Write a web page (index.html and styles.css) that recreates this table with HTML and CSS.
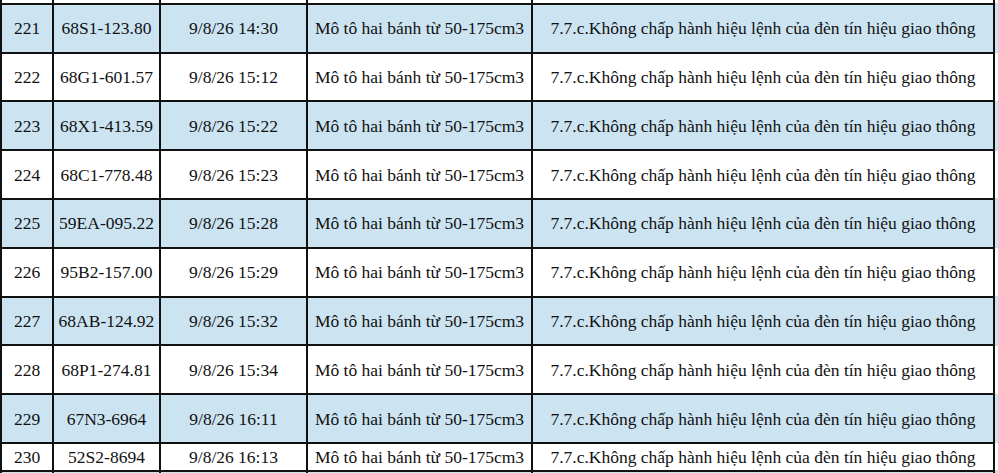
FILE: index.html
```html
<!DOCTYPE html>
<html lang="vi">
<head>
<meta charset="utf-8">
<link rel="stylesheet" href="styles.css">
</head>
<body>
<div class="sheet">
<table class="grid">
<colgroup>
<col class="c-no"><col class="c-plate"><col class="c-time"><col class="c-type"><col class="c-err"><col class="c-extra">
</colgroup>
<tbody>
<tr class="row plain"><td></td><td></td><td></td><td></td><td></td><td class="extra"></td></tr>
<tr class="row blue"><td>221</td><td>68S1-123.80</td><td>9/8/26 14:30</td><td>Mô tô hai bánh từ 50-175cm3</td><td>7.7.c.Không chấp hành hiệu lệnh của đèn tín hiệu giao thông</td><td class="extra"></td></tr>
<tr class="row plain"><td>222</td><td>68G1-601.57</td><td>9/8/26 15:12</td><td>Mô tô hai bánh từ 50-175cm3</td><td>7.7.c.Không chấp hành hiệu lệnh của đèn tín hiệu giao thông</td><td class="extra"></td></tr>
<tr class="row blue"><td>223</td><td>68X1-413.59</td><td>9/8/26 15:22</td><td>Mô tô hai bánh từ 50-175cm3</td><td>7.7.c.Không chấp hành hiệu lệnh của đèn tín hiệu giao thông</td><td class="extra"></td></tr>
<tr class="row plain"><td>224</td><td>68C1-778.48</td><td>9/8/26 15:23</td><td>Mô tô hai bánh từ 50-175cm3</td><td>7.7.c.Không chấp hành hiệu lệnh của đèn tín hiệu giao thông</td><td class="extra"></td></tr>
<tr class="row blue"><td>225</td><td>59EA-095.22</td><td>9/8/26 15:28</td><td>Mô tô hai bánh từ 50-175cm3</td><td>7.7.c.Không chấp hành hiệu lệnh của đèn tín hiệu giao thông</td><td class="extra"></td></tr>
<tr class="row plain"><td>226</td><td>95B2-157.00</td><td>9/8/26 15:29</td><td>Mô tô hai bánh từ 50-175cm3</td><td>7.7.c.Không chấp hành hiệu lệnh của đèn tín hiệu giao thông</td><td class="extra"></td></tr>
<tr class="row blue"><td>227</td><td>68AB-124.92</td><td>9/8/26 15:32</td><td>Mô tô hai bánh từ 50-175cm3</td><td>7.7.c.Không chấp hành hiệu lệnh của đèn tín hiệu giao thông</td><td class="extra"></td></tr>
<tr class="row plain"><td>228</td><td>68P1-274.81</td><td>9/8/26 15:34</td><td>Mô tô hai bánh từ 50-175cm3</td><td>7.7.c.Không chấp hành hiệu lệnh của đèn tín hiệu giao thông</td><td class="extra"></td></tr>
<tr class="row blue"><td>229</td><td>67N3-6964</td><td>9/8/26 16:11</td><td>Mô tô hai bánh từ 50-175cm3</td><td>7.7.c.Không chấp hành hiệu lệnh của đèn tín hiệu giao thông</td><td class="extra"></td></tr>
<tr class="row plain short"><td>230</td><td>52S2-8694</td><td>9/8/26 16:13</td><td>Mô tô hai bánh từ 50-175cm3</td><td>7.7.c.Không chấp hành hiệu lệnh của đèn tín hiệu giao thông</td><td class="extra"></td></tr>
<tr class="row blue"><td></td><td></td><td></td><td></td><td></td><td class="extra"></td></tr>
</tbody>
</table>
</div>
</body>
</html>
```
FILE: styles.css
```css
html, body {
  margin: 0;
  padding: 0;
  background: #ffffff;
}
.sheet {
  width: 998px;
  height: 473px;
  overflow: hidden;
}
.grid {
  border-collapse: collapse;
  table-layout: fixed;
  width: 1013px;
  margin-top: -46px;
  font-family: "Liberation Serif", "Times New Roman", serif;
  font-size: 17.5px;
  color: #111111;
}
.c-no { width: 52px; }
.c-plate { width: 107px; }
.c-time { width: 147px; }
.c-type { width: 225px; }
.c-err { width: 462px; }
.c-extra { width: 20px; }
.grid td {
  border: 2px solid #111111;
  padding: 0;
  text-align: center;
  vertical-align: middle;
  white-space: nowrap;
  height: 46.8px;
  line-height: 20px;
}
.grid td.extra {
  border-top: 1px solid #d8d8d8;
  border-bottom: 1px solid #d8d8d8;
  border-right: none;
  background: #ffffff;
}
.row.blue td { background: #cce4f2; }
.row.plain td { background: #ffffff; }
.row.short td { height: 26px; }
```
